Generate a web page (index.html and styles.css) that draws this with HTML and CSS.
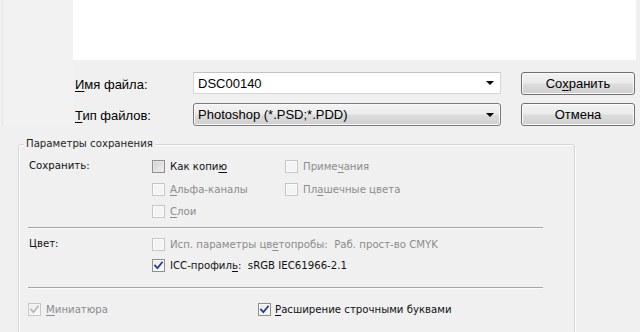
FILE: index.html
```html
<!DOCTYPE html>
<html lang="ru">
<head>
<meta charset="utf-8">
<title>Сохранить как</title>
<link rel="stylesheet" href="styles.css">
</head>
<body>
<div class="dialog">
  <div class="top">
    <div class="nav"></div>
    <div class="main">
      <div class="list"></div>
      <div class="form">
        <div class="row">
          <label class="lbl"><u>И</u>мя файла:</label>
          <div class="field input"><span>DSC00140</span><span class="arrow"></span></div>
          <button class="btn">Со<u>х</u>ранить</button>
        </div>
        <div class="row">
          <label class="lbl"><u>Т</u>ип файлов:</label>
          <div class="field combo"><span>Photoshop (*.PSD;*.PDD)</span><span class="arrow"></span></div>
          <button class="btn">Отмена</button>
        </div>
      </div>
    </div>
  </div>

  <div class="group">
    <span class="legend">Параметры сохранения</span>

    <div class="sec sec1">
      <span class="glbl">Сохранить:</span>
      <label class="cb"><span class="box on"></span><span>Как копи<u>ю</u></span></label>
      <label class="cb dis"><span class="box"></span><span>Приме<u>ч</u>ания</span></label>
      <span></span>
      <label class="cb dis"><span class="box"></span><span><u>А</u>льфа-каналы</span></label>
      <label class="cb dis"><span class="box"></span><span>Пл<u>а</u>шечные цвета</span></label>
      <span></span>
      <label class="cb dis"><span class="box"></span><span><u>С</u>лои</span></label>
    </div>

    <div class="sep sep1"></div>

    <div class="sec sec2">
      <span class="glbl">Цвет:</span>
      <label class="cb dis wide"><span class="box"></span><span class="pre">Исп. параметры цв<u>е</u>топробы:  Раб. прост-во CMYK</span></label>
      <span></span>
      <label class="cb wide"><span class="box chk"><svg viewBox="0 0 13 13" width="13" height="13"><path d="M3 6.6 L5.4 9.2 L10 3.4" /></svg></span><span class="pre">ICC-профил<u>ь</u>:  sRGB IEC61966-2.1</span></label>
    </div>

    <div class="sep sep2"></div>

    <div class="sec3">
      <label class="cb dis"><span class="box chk"><svg viewBox="0 0 13 13" width="13" height="13"><path d="M3 6.6 L5.4 9.2 L10 3.4" /></svg></span><span><u>М</u>иниатюра</span></label>
      <label class="cb"><span class="box chk"><svg viewBox="0 0 13 13" width="13" height="13"><path d="M3 6.6 L5.4 9.2 L10 3.4" /></svg></span><span><u>Р</u>асширение строчными буквами</span></label>
    </div>
  </div>
</div>
</body>
</html>
```

FILE: styles.css
```css
* { box-sizing: border-box; }
html, body {
  margin: 0;
  padding: 0;
  width: 640px;
  height: 332px;
  overflow: hidden;
  background: #f0f0f0;
}
.dialog {
  width: 640px;
  height: 332px;
  overflow: hidden;
  font-family: "Liberation Sans", Arial, sans-serif;
  font-size: 13px;
  color: #000;
}
u { text-decoration: underline; text-underline-offset: 2px; }

.top {
  display: grid;
  grid-template-columns: 73px 1fr;
  height: 126px;
}
.nav {
  background: #f2f2f2;
  border-left: 2px solid #f0f0f0;
  box-shadow: inset 1px 0 0 #e4e4e4;
}
.main {
  display: flex;
  flex-direction: column;
}
.list {
  height: 60px;
  background: #fff;
  margin-right: 4px;
}
.form {
  padding: 12px 0 0 2px;
  display: flex;
  flex-direction: column;
  gap: 8px;
}
.row {
  display: flex;
  align-items: center;
  height: 23px;
}
.lbl {
  width: 118px;
  padding-top: 1px;
}
.field {
  width: 308px;
  height: 23px;
  display: flex;
  align-items: center;
  justify-content: space-between;
  padding: 0 5px 0 4px;
}
.input {
  height: 22px;
  align-self: flex-start;
  background: #fff;
  border: 1px solid #d6d6d6;
  border-top-color: #c4c4c4;
}
.combo {
  border: 1px solid #7a7a7a;
  border-radius: 3px;
  background: linear-gradient(#f4f4f4 0%, #ebebeb 48%, #dddddd 52%, #cfcfcf 100%);
  box-shadow: inset 0 0 0 1px #fafafa;
}
.arrow {
  width: 0;
  height: 0;
  border-left: 4px solid transparent;
  border-right: 4px solid transparent;
  border-top: 4px solid #000;
  margin-right: 1px;
}
.btn {
  margin-left: 20px;
  width: 114px;
  height: 23px;
  font: inherit;
  color: #000;
  border: 1px solid #707070;
  border-radius: 3px;
  background: linear-gradient(#f2f2f2 0%, #ebebeb 48%, #dddddd 52%, #cfcfcf 100%);
  box-shadow: inset 0 0 0 1px #fbfbfb;
  padding: 0;
}

.group {
  position: relative;
  margin: 18px 0 0 18px;
  width: 557px;
  height: 220px;
  border: 1px solid #d5d5d5;
  border-radius: 3px;
  box-shadow: inset 1px 1px 0 #fff, 1px 1px 0 #fff;
  font-family: "DejaVu Sans Condensed", "DejaVu Sans", sans-serif;
  font-size: 11.3px;
  color: #111;
}
.legend {
  position: absolute;
  top: -8px;
  left: 5px;
  padding: 0 2px;
  line-height: 14px;
  background: #f0f0f0;
  color: #1e1e1e;
}
.sec {
  display: grid;
  grid-template-columns: 123px 133px 1fr;
  padding-left: 10px;
}
.sec1 {
  padding-top: 10px;
  grid-template-rows: 23px 22px 22px;
}
.sec2 {
  padding-top: 5px;
  grid-template-rows: 21px 21px;
}
.glbl {
  display: flex;
  align-items: center;
  margin-top: -3px;
}
.cb {
  display: flex;
  align-items: center;
  gap: 5px;
  white-space: nowrap;
}
.cb.wide { grid-column: 2 / 4; }
.cb.dis { color: #8c8c8c; }
.pre { white-space: pre; }

.box {
  flex: none;
  width: 13px;
  height: 13px;
  border: 1px solid #8e8f8f;
  background: linear-gradient(135deg, #dcdcdc, #f6f6f6);
  box-shadow: inset 0 0 0 1px #f0f0f0;
  display: flex;
}
.box.on {
  background: linear-gradient(135deg, #cfcfcf, #f2f2f2);
  box-shadow: inset 0 0 0 1px #e6e6e6;
}
.dis .box {
  border-color: #c6c6c6;
  background: #f4f4f4;
  box-shadow: inset 0 0 0 1px #fbfbfb;
}
.box.chk {
  background: linear-gradient(135deg, #e9e9e9, #fdfdfd);
  box-shadow: inset 0 0 0 1px #f7f7f7;
}
.box svg {
  margin: -1px;
  flex: none;
}
.box svg path {
  fill: none;
  stroke: #1e3c8c;
  stroke-width: 1.8;
  stroke-linecap: square;
}
.dis .box svg path { stroke: #b8b8b8; }

.sep {
  margin-left: 9px;
  width: 515px;
  height: 2px;
  border-top: 1px solid #a5a5a5;
  border-bottom: 1px solid #fbfbfb;
}
.sep1 { margin-top: 5px; }
.sep2 { margin-top: 11px; }

.sec3 {
  display: grid;
  grid-template-columns: 230px 1fr;
  grid-template-rows: 21px;
  padding: 10px 0 0 9px;
}
.sec3 .cb:last-child { gap: 4px; }
```
